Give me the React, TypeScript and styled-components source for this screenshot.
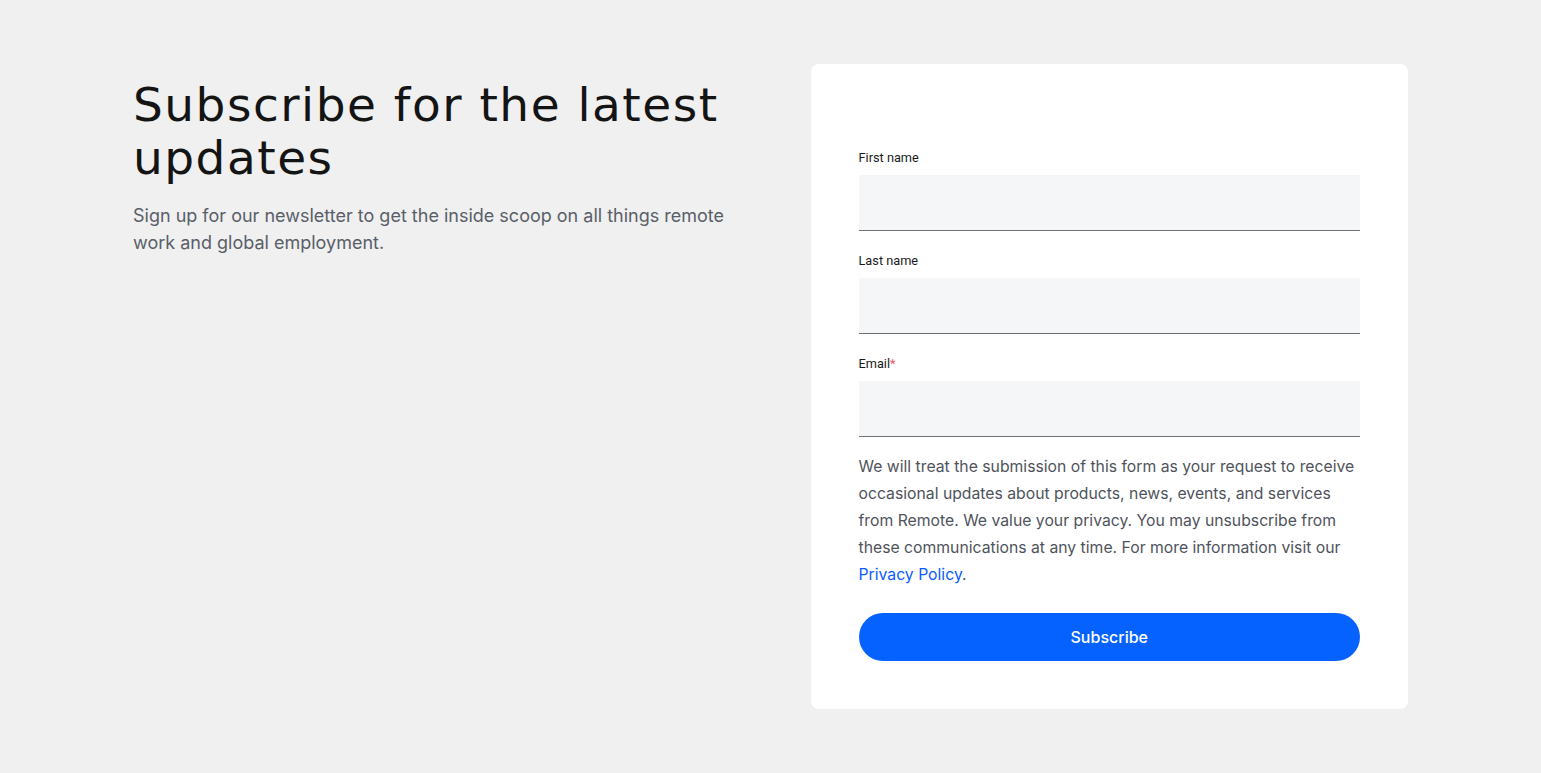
import React from "react";
import styled, { createGlobalStyle } from "styled-components";

const Global = createGlobalStyle`
  html, body { margin: 0; padding: 0; background: #eff0ef; }
  * { box-sizing: border-box; }
`;

const Page = styled.main`
  min-height: 773px;
  background: #eff0ef;
  padding: 64px 133px 64px;
`;

const Grid = styled.div`
  display: grid;
  grid-template-columns: 1fr 1fr;
  column-gap: 80px;
  align-items: start;
`;

const Intro = styled.section`
  padding-top: 14px;
`;

const Heading = styled.h1`
  margin: 0;
  font-family: "DejaVu Sans", "Open Sans", sans-serif;
  font-weight: 400;
  font-size: 47px;
  line-height: 53px;
  letter-spacing: 1.5px;
  color: #141414;
`;

const Lead = styled.p`
  margin: 18px 0 0;
  font-family: "Inter", sans-serif;
  font-size: 18px;
  line-height: 27px;
  color: #5a5e69;
`;

const Card = styled.section`
  background: #ffffff;
  border-radius: 8px;
  padding: 85px 48px 48px;
`;

const Field = styled.div`
  display: flex;
  flex-direction: column;
  gap: 8px;
  margin-bottom: 21px;
`;

const Label = styled.label`
  font-family: "Roboto", "Liberation Sans", sans-serif;
  font-size: 12.75px;
  line-height: 18px;
  color: #1b1b1b;
`;

const Required = styled.span`
  color: #f0585f;
`;

const Input = styled.input`
  display: block;
  width: 100%;
  height: 56px;
  border: none;
  border-bottom: 1px solid #6e7178;
  background: #f5f6f8;
  padding: 0 12px;
  font-family: "Inter", sans-serif;
  font-size: 16px;
  outline: none;
`;

const Notice = styled.p`
  margin: -5px 0 0;
  font-family: "Inter", sans-serif;
  font-size: 15.75px;
  line-height: 27px;
  color: #4f535c;
`;

const Link = styled.a`
  color: #0a5cff;
  text-decoration: none;
`;

const Button = styled.button`
  display: block;
  width: 100%;
  height: 48px;
  margin-top: 25px;
  border: none;
  border-radius: 24px;
  background: #0562ff;
  color: #ffffff;
  font-family: "Inter", sans-serif;
  font-weight: 500;
  font-size: 16px;
  cursor: pointer;
`;

export default function App() {
  return (
    <>
      <Global />
      <Page>
        <Grid>
          <Intro>
            <Heading>Subscribe for the latest updates</Heading>
            <Lead>
              Sign up for our newsletter to get the inside scoop on all things remote work and global employment.
            </Lead>
          </Intro>
          <Card>
            <form onSubmit={(e) => e.preventDefault()}>
              <Field>
                <Label htmlFor="fn">First name</Label>
                <Input id="fn" type="text" />
              </Field>
              <Field>
                <Label htmlFor="ln">Last name</Label>
                <Input id="ln" type="text" />
              </Field>
              <Field>
                <Label htmlFor="em">
                  Email<Required>*</Required>
                </Label>
                <Input id="em" type="email" />
              </Field>
              <Notice>
                We will treat the submission of this form as your request to receive occasional updates about
                products, news, events, and services from Remote. We value your privacy. You may unsubscribe from
                these communications at any time. For more information visit our{" "}
                <Link href="#">Privacy Policy</Link>.
              </Notice>
              <Button type="submit">Subscribe</Button>
            </form>
          </Card>
        </Grid>
      </Page>
    </>
  );
}
